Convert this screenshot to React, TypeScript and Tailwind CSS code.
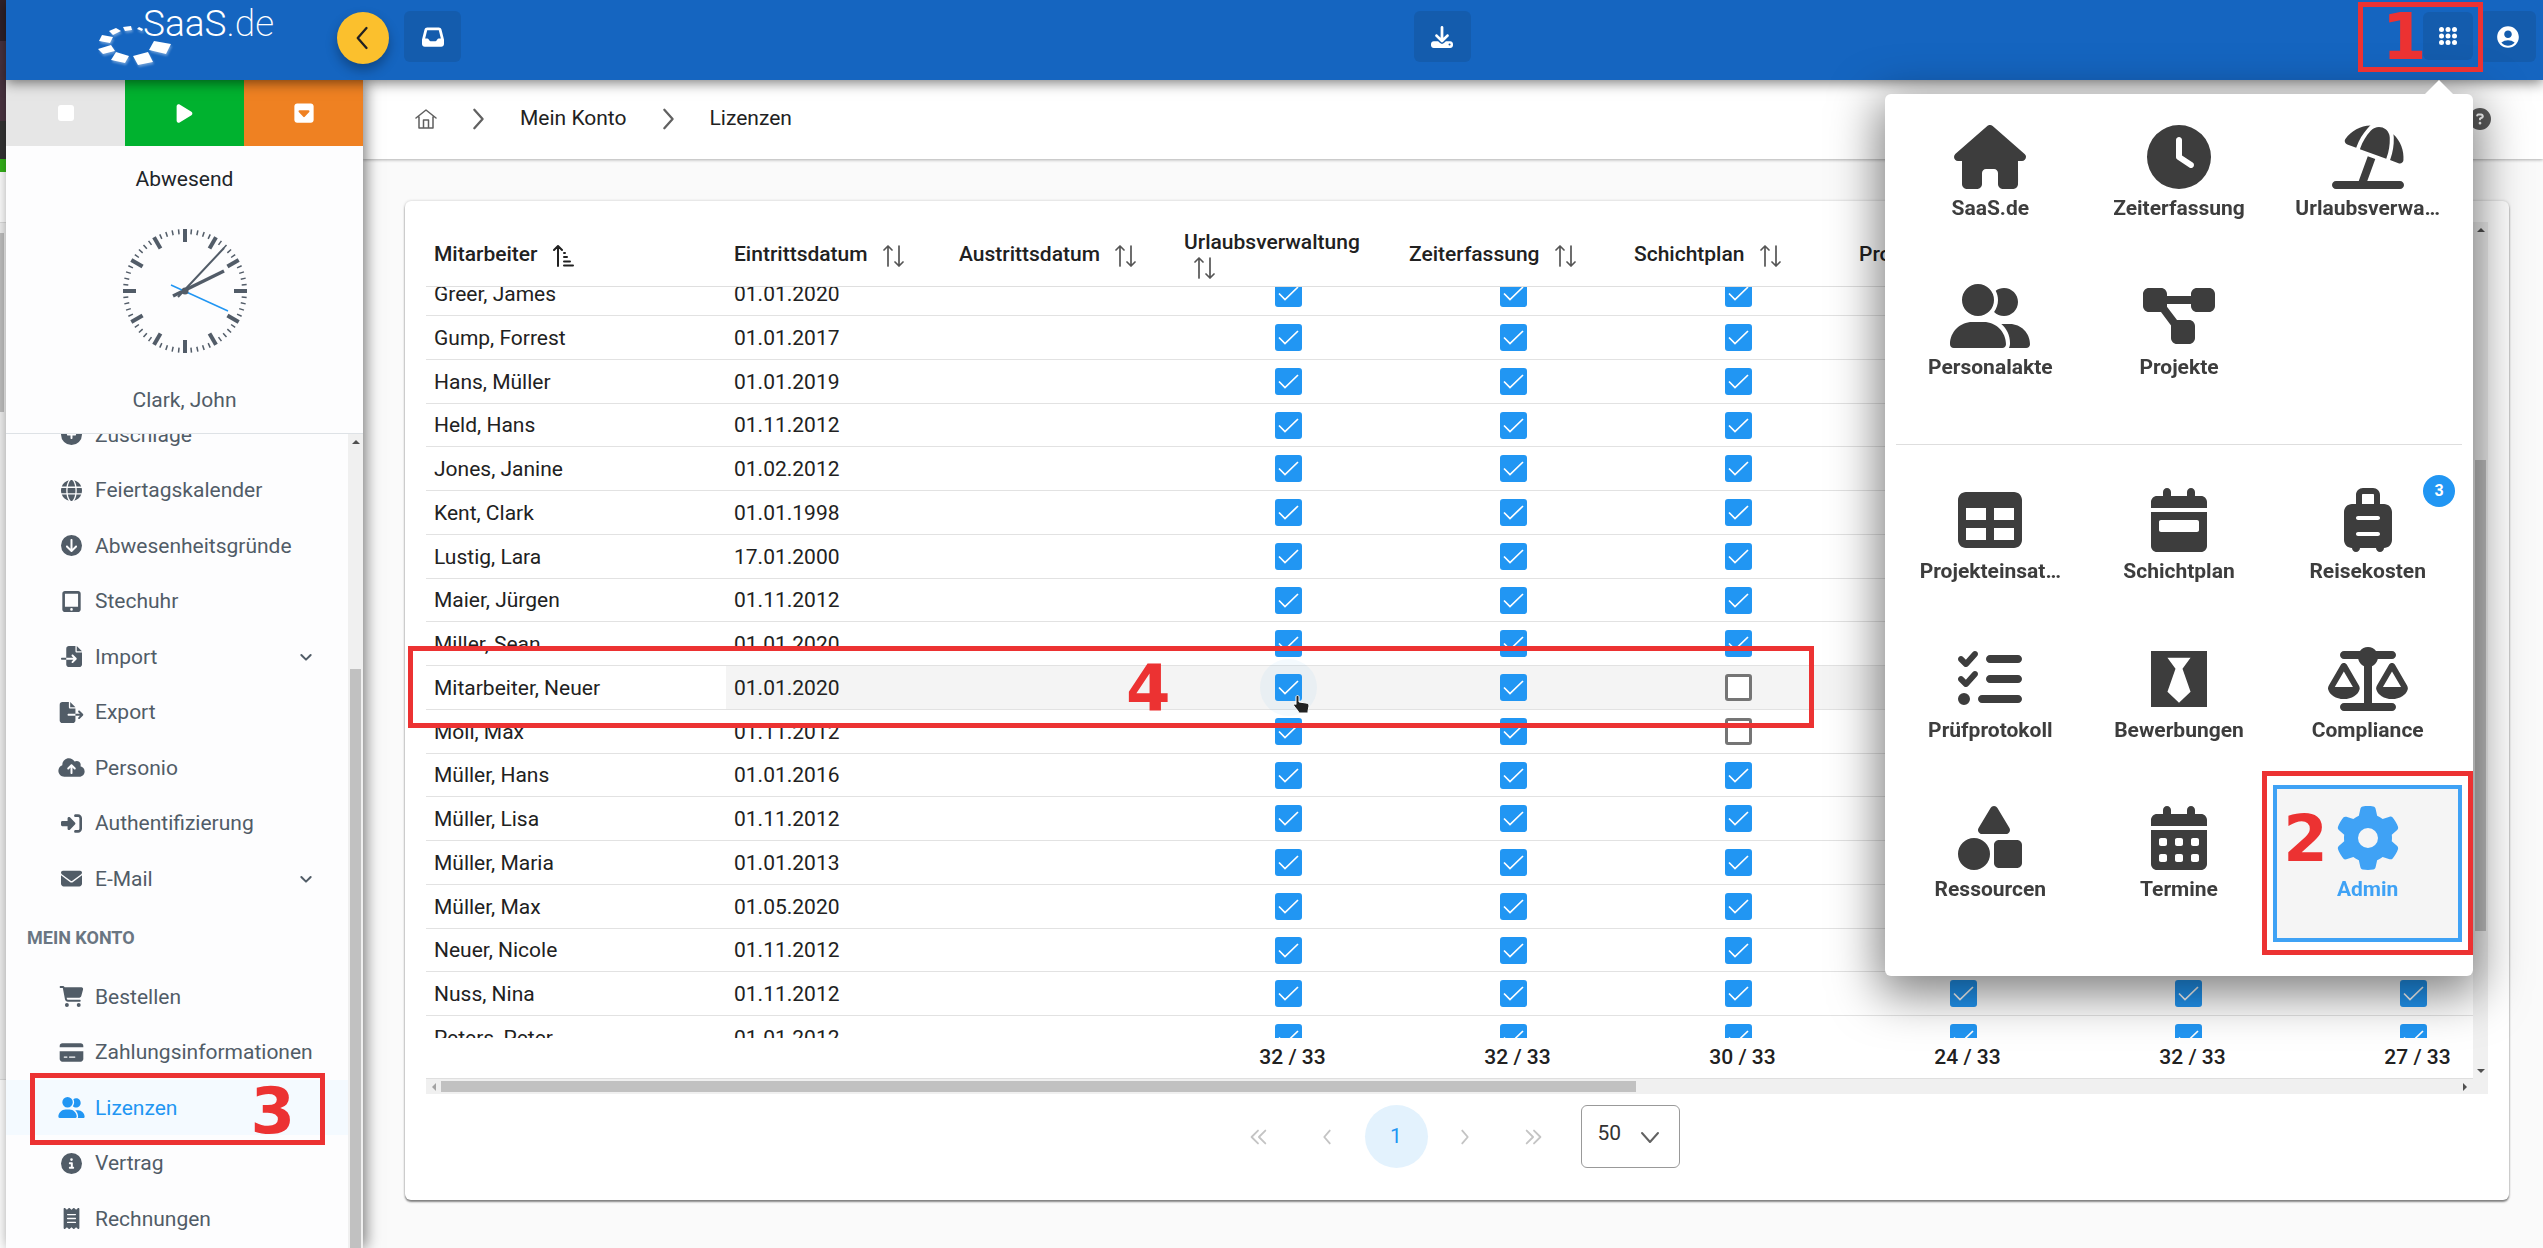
import { useLayoutEffect, useRef, type ComponentType, type ReactNode } from "react";
import {
  FaBlackTie,
  FaCalendarDays,
  FaCalendarWeek,
  FaCartShopping,
  FaCircleArrowDown,
  FaCircleInfo,
  FaCirclePlus,
  FaCircleQuestion,
  FaClock,
  FaCloudArrowUp,
  FaCreditCard,
  FaDiagramProject,
  FaDownload,
  FaEnvelope,
  FaFileExport,
  FaFileImport,
  FaGear,
  FaGlobe,
  FaHouse,
  FaInbox,
  FaListCheck,
  FaPlay,
  FaReceipt,
  FaRightToBracket,
  FaScaleBalanced,
  FaShapes,
  FaSquareCaretDown,
  FaSuitcaseRolling,
  FaTable,
  FaTabletScreenButton,
  FaUmbrellaBeach,
  FaUserGroup,
} from "react-icons/fa6";
import { MdAccountCircle } from "react-icons/md";

type Icon = ComponentType<{ className?: string }>;

function useInitialScroll<T extends HTMLElement>(top: number) {
  const ref = useRef<T>(null);
  useLayoutEffect(() => {
    if (ref.current) ref.current.scrollTop = top;
  }, [top]);
  return ref;
}

/* ---------- small drawings ---------- */

function Chevron({ d, className }: { d: string; className: string }) {
  return (
    <svg viewBox="0 0 24 24" className={className} fill="none" stroke="currentColor" strokeLinecap="round" strokeLinejoin="round" aria-hidden="true">
      <path d={d} />
    </svg>
  );
}

function LogoRing() {
  return (
    <svg viewBox="0 0 76 42" className="h-[42px] w-[76px] drop-shadow-[1px_2px_1px_rgba(255,255,255,0.35)]" fill="#fff" aria-hidden="true">
      <polygon points="56,15 73,18 68,28 51,24" />
      <polygon points="35,30 50,26 55,36 40,39" />
      <polygon points="18,26 31,30 27,37 13,34" />
      <polygon points="0,23 13,19 17,25 5,28" />
      <polygon points="4,9 15,11 12,17 1,15" />
      <polygon points="11,5 18,2 23,5 15,9" />
      <polygon points="25,1 33,0 34,4 27,5" />
      <polygon points="39,3 41,1 45,3 44,5" />
    </svg>
  );
}

function HomeOutline() {
  return (
    <svg viewBox="0 0 22 20" className="h-5 w-[22px]" fill="none" stroke="#5f5f5f" strokeWidth="1.5" strokeLinejoin="round" strokeLinecap="round" aria-hidden="true">
      <path d="M1 9 11 1l10 8M4 7.500V19h14V7.500M8.500 19v-8h5v8" />
    </svg>
  );
}

function SortBoth() {
  return (
    <svg viewBox="0 0 21 22" className="ml-[10px] inline-block h-[22px] w-[21px] align-[-6px]" fill="none" stroke="#555" strokeWidth="1.700" strokeLinecap="round" strokeLinejoin="round" aria-hidden="true">
      <path d="M5 21V1M1 5l4-4 4 4M16 1v20M12 17l4 4 4-4" />
    </svg>
  );
}

function SortAscending() {
  return (
    <svg viewBox="0 0 21 22" className="ml-[10px] inline-block h-[22px] w-[21px] align-[-6px]" fill="none" stroke="#212121" strokeWidth="2" strokeLinecap="round" strokeLinejoin="round" aria-hidden="true">
      <path d="M5 21V1M1 5l4-4 4 4M11 8h1M11 12h3M11 16.500h6M11 20.500h9" />
    </svg>
  );
}

function AppsGrid() {
  return (
    <svg viewBox="0 0 18 18" className="size-[18px]" fill="#fff" aria-hidden="true">
      {[2.5, 9, 15.5].map((y) => [2.5, 9, 15.5].map((x) => <circle key={`${x}-${y}`} cx={x} cy={y} r="2.5" />))}
    </svg>
  );
}

function Clock() {
  const ticks = Array.from({ length: 60 }, (_, i) => i);
  return (
    <svg viewBox="-62 -62 124 124" className="size-[124px]" role="img" aria-label="Uhr">
      {ticks.map((i) => (
        <line
          key={i}
          y1={-62}
          y2={i % 5 === 0 ? -49 : -57}
          stroke="#525c68"
          strokeWidth={i % 5 === 0 ? 4 : 1.5}
          transform={`rotate(${i * 6})`}
        />
      ))}
      <line x1="-7" y1="6" x2="39" y2="-43" stroke="#525c68" strokeWidth="2" />
      <line x1="-12" y1="5" x2="39" y2="-20" stroke="#525c68" strokeWidth="3.500" />
      <line x1="-14" y1="-6" x2="43" y2="20" stroke="#2196f3" strokeWidth="1.500" />
      <circle r="3.500" fill="#525c68" />
    </svg>
  );
}

function HandCursor() {
  return (
    <svg viewBox="0 0 17 19" className="pointer-events-none absolute left-[18px] top-[21px] h-[19px] w-[17px]" fill="#222" stroke="#fff" strokeWidth="1" strokeLinejoin="round" aria-hidden="true">
      <path d="M3 2c0-2 3-2 3 0v5l7 1c2 .4 3 1 3 3l-1 5v2H6l-1-2-4-5c-1-1.500 1-3 2-1.500z" />
    </svg>
  );
}

function Caret({ dir, className }: { dir: "up" | "down" | "left" | "right"; className?: string }) {
  const d = { up: "M0 6 4 2l4 4z", down: "M0 2h8L4 6z", left: "M6 0v8L2 4z", right: "M2 0v8l4-4z" }[dir];
  return (
    <svg viewBox="0 0 8 8" className={`size-2 shrink-0 ${className ?? "text-[#505050]"}`} fill="currentColor" aria-hidden="true">
      <path d={d} />
    </svg>
  );
}

/* ---------- header ---------- */

const apps1: Array<[Icon, string]> = [
  [FaHouse, "SaaS.de"],
  [FaClock, "Zeiterfassung"],
  [FaUmbrellaBeach, "Urlaubsverwa…"],
  [FaUserGroup, "Personalakte"],
  [FaDiagramProject, "Projekte"],
];
const apps2: Array<[Icon, string]> = [
  [FaTable, "Projekteinsat…"],
  [FaCalendarWeek, "Schichtplan"],
  [FaSuitcaseRolling, "Reisekosten"],
  [FaListCheck, "Prüfprotokoll"],
  [FaBlackTie, "Bewerbungen"],
  [FaScaleBalanced, "Compliance"],
  [FaShapes, "Ressourcen"],
  [FaCalendarDays, "Termine"],
  [FaGear, "Admin"],
];

function AppTile({ icon: I, label }: { icon: Icon; label: string }) {
  const active = label === "Admin";
  return (
    <div className="relative">
      <button
        className={
          active
            ? "flex h-[157px] w-full flex-col items-center bg-[#f5f5f5] pt-[21px] text-[#3fa2f5] outline-4 -outline-offset-4 outline-[#3fa2f5]"
            : "flex h-[157px] w-full flex-col items-center pt-[21px] text-[#3d3d3d]"
        }
      >
        <I className="h-16 w-20" />
        <span className="mt-[7px] text-[21px] leading-6 font-bold">{label}</span>
      </button>
      {label === "Reisekosten" && (
        <span className="absolute top-2 right-[7px] flex size-8 items-center justify-center rounded-full bg-[#2196f3] text-base font-bold text-white">3</span>
      )}
      {active && (
        <span className="pointer-events-none absolute -inset-x-[11px] -top-[14px] -bottom-[13px] border-[5px] border-[#ec3232]">
          <span className="absolute top-[39px] left-4 font-['DejaVu_Sans'] text-[64px] leading-12 font-bold text-[#ec3232]">2</span>
        </span>
      )}
    </div>
  );
}

function AppMenu() {
  return (
    <div className="absolute top-[82px] right-0 w-[588px] rounded-md bg-white px-[11px] pt-[10px] pb-[34px] shadow-[0_12px_48px_6px_rgba(0,0,0,0.5)]">
      <span className="absolute -top-[14px] right-[20px] border-x-[14px] border-b-[14px] border-x-transparent border-b-white" />
      <div className="grid grid-cols-3 gap-y-0.5">
        {apps1.map(([icon, label]) => (
          <AppTile key={label} icon={icon} label={label} />
        ))}
      </div>
      <hr className="mt-6 mb-[22px] border-[#dedede]" />
      <div className="grid grid-cols-3 gap-y-0.5">
        {apps2.map(([icon, label]) => (
          <AppTile key={label} icon={icon} label={label} />
        ))}
      </div>
    </div>
  );
}

function HeaderButton({ label, children }: { label: string; children: ReactNode }) {
  return (
    <button aria-label={label} className="mt-[11px] flex h-[51px] w-[57px] items-center justify-center rounded-md bg-[#145cad] text-white">
      {children}
    </button>
  );
}

function Header() {
  return (
    <header className="relative z-30 flex h-20 shrink-0 items-start bg-[#1565c0] pr-[7px] shadow-[0_3px_12px_rgba(0,0,0,0.5)]">
      <a href="#start" className="flex h-full w-[331px] items-start pl-[92px] text-white">
        <span className="mt-[26px] shrink-0">
          <LogoRing />
        </span>
        <span className="-ml-[31px] pt-1 text-[37px] leading-10 font-light">
          SaaS<span className="font-extralight">.de</span>
        </span>
      </a>
      <button aria-label="Menü einklappen" className="mt-3 flex size-[52px] items-center justify-center rounded-full bg-[#fbc02d] text-[#212121] shadow-[0_6px_12px_rgba(0,0,0,0.3)]">
        <Chevron d="M15 3.500 7.500 12l7.500 8.500" className="size-7 stroke-2" />
      </button>
      <div className="ml-[15px]">
        <HeaderButton label="Posteingang">
          <FaInbox className="size-[22px]" />
        </HeaderButton>
      </div>
      <div className="flex flex-1 justify-center">
        <HeaderButton label="Herunterladen">
          <FaDownload className="size-[22px]" />
        </HeaderButton>
      </div>
      <div className="relative mt-3">
        <button aria-label="Apps" className="flex h-12 w-[50px] items-center justify-center rounded-md bg-[#145cad]">
          <AppsGrid />
        </button>
        <AppMenu />
        <span className="pointer-events-none absolute -top-[10px] -right-[10px] z-10 h-[70px] w-[125px] border-[5px] border-[#ec3232]">
          <span className="absolute top-[6px] left-[19px] font-['DejaVu_Sans'] text-[64px] leading-12 font-bold text-[#ec3232]">1</span>
        </span>
      </div>
      <div className="ml-[6px]">
        <HeaderButton label="Benutzerkonto">
          <MdAccountCircle className="size-[26px]" />
        </HeaderButton>
      </div>
    </header>
  );
}

/* ---------- sidebar ---------- */

const nav1: Array<[Icon, string, boolean?]> = [
  [FaCirclePlus, "Zuschläge"],
  [FaGlobe, "Feiertagskalender"],
  [FaCircleArrowDown, "Abwesenheitsgründe"],
  [FaTabletScreenButton, "Stechuhr"],
  [FaFileImport, "Import", true],
  [FaFileExport, "Export"],
  [FaCloudArrowUp, "Personio"],
  [FaRightToBracket, "Authentifizierung"],
  [FaEnvelope, "E-Mail", true],
];
const nav2: Array<[Icon, string, boolean?]> = [
  [FaCartShopping, "Bestellen"],
  [FaCreditCard, "Zahlungsinformationen"],
  [FaUserGroup, "Lizenzen"],
  [FaCircleInfo, "Vertrag"],
  [FaReceipt, "Rechnungen"],
];

function NavList({ items }: { items: Array<[Icon, string, boolean?]> }) {
  return (
    <ul>
      {items.map(([I, label, expandable]) => {
        const active = label === "Lizenzen";
        return (
          <li key={label} className="relative h-[55px] even:h-14">
            <a
              href={`#${label}`}
              className={
                active
                  ? "flex h-full items-center bg-[#f4faff] pr-[34px] pl-[52px] text-[#2196f3]"
                  : "flex h-full items-center pr-[34px] pl-[52px] text-[#515c67]"
              }
            >
              <I className="h-[21px] w-[27px] shrink-0" />
              <span className="ml-[10px] flex-1 text-[21px] leading-6">{label}</span>
              {expandable && <Chevron d="M5 9l7 7 7-7" className="size-4 shrink-0 stroke-3" />}
            </a>
            {active && (
              <span className="pointer-events-none absolute -top-[7px] -bottom-[10px] left-6 z-10 w-[295px] border-[5px] border-[#ec3232]">
                <span className="absolute top-[9px] right-[25px] font-['DejaVu_Sans'] text-[64px] leading-12 font-bold text-[#ec3232]">3</span>
              </span>
            )}
          </li>
        );
      })}
    </ul>
  );
}

function Sidebar() {
  const menu = useInitialScroll<HTMLElement>(27);
  return (
    <aside className="relative z-20 flex w-[357px] shrink-0 flex-col bg-[#fdfdfe] shadow-[3px_0_14px_rgba(0,0,0,0.5)]">
      <div className="grid h-[66px] shrink-0 grid-cols-3 text-white">
        <button aria-label="Stopp" className="flex items-center justify-center bg-[#e6e6e6]">
          <span className="size-4 rounded-[3px] bg-white" />
        </button>
        <button aria-label="Start" className="flex items-center justify-center bg-[#00b22f]">
          <FaPlay className="h-[21px] w-auto" />
        </button>
        <button aria-label="Aktionen" className="flex items-center justify-center bg-[#ef8122]">
          <FaSquareCaretDown className="h-[22px] w-auto" />
        </button>
      </div>
      <div className="flex shrink-0 flex-col items-center border-b border-[#dee2e6] pt-[21px] pb-[21px] text-[21px] leading-6">
        <p className="text-[#212529]">Abwesend</p>
        <div className="mt-[38px] mb-[35px]">
          <Clock />
        </div>
        <p className="text-[#515c67]">Clark, John</p>
      </div>
      <div className="flex min-h-0 flex-1">
        <nav ref={menu} className="flex-1 overflow-hidden pb-4">
          <NavList items={nav1} />
          <h2 className="flex h-[63px] items-center pl-[21px] text-lg font-bold text-[#6a7682]">MEIN KONTO</h2>
          <NavList items={nav2} />
        </nav>
        <div className="flex w-[15px] flex-col items-center bg-[#f0f0f0] pt-1">
          <Caret dir="up" />
          <div className="mt-[223px] w-[11px] flex-1 bg-[#c1c1c1]" />
        </div>
      </div>
    </aside>
  );
}

/* ---------- licence table ---------- */

const modules = ["Urlaubsverwaltung", "Zeiterfassung", "Schichtplan", "Projekte", "Personalakte", "Reisekosten"];
const totals = ["32 / 33", "32 / 33", "30 / 33", "24 / 33", "32 / 33", "27 / 33"];
const employees: Array<[string, string]> = [
  ["Greer, James", "01.01.2020"],
  ["Gump, Forrest", "01.01.2017"],
  ["Hans, Müller", "01.01.2019"],
  ["Held, Hans", "01.11.2012"],
  ["Jones, Janine", "01.02.2012"],
  ["Kent, Clark", "01.01.1998"],
  ["Lustig, Lara", "17.01.2000"],
  ["Maier, Jürgen", "01.11.2012"],
  ["Miller, Sean", "01.01.2020"],
  ["Mitarbeiter, Neuer", "01.01.2020"],
  ["Moll, Max", "01.11.2012"],
  ["Müller, Hans", "01.01.2016"],
  ["Müller, Lisa", "01.11.2012"],
  ["Müller, Maria", "01.01.2013"],
  ["Müller, Max", "01.05.2020"],
  ["Neuer, Nicole", "01.11.2012"],
  ["Nuss, Nina", "01.11.2012"],
  ["Peters, Peter", "01.01.2012"],
];

function LicenceBox({ label, checked, hovered }: { label: string; checked: boolean; hovered: boolean }) {
  return (
    <span className="relative mx-auto flex size-[27px]">
      {hovered && <span className="absolute -inset-[15px] rounded-full bg-[#2196f3]/5" />}
      <input
        type="checkbox"
        aria-label={label}
        defaultChecked={checked}
        className="peer relative size-[27px] appearance-none rounded-[3px] border-[3px] border-[#757575] bg-white checked:border-[#2196f3] checked:bg-[#2196f3]"
      />
      <svg viewBox="0 0 27 27" className="pointer-events-none absolute inset-0 hidden size-[27px] peer-checked:block" fill="none" stroke="#fff" strokeWidth="1.700" aria-hidden="true">
        <path d="M4 13.500l6 6L23 7" />
      </svg>
      {hovered && <HandCursor />}
    </span>
  );
}

function LicenceTable() {
  const scroller = useInitialScroll<HTMLDivElement>(15);
  return (
    <div ref={scroller} className="min-h-0 min-w-0 flex-1 overflow-hidden">
      <table className="w-[2100px] table-fixed border-separate border-spacing-0 text-left text-[21px] leading-6 text-[#212121]">
        <colgroup>
          <col className="w-[300px]" />
          <col span={8} className="w-[225px]" />
        </colgroup>
        <thead className="sticky top-0 z-10 bg-white">
          <tr className="h-[65px]">
            <th className="border-b border-[#dfdfdf] px-2 font-medium">
              Mitarbeiter <SortAscending />
            </th>
            {["Eintrittsdatum", "Austrittsdatum", ...modules].map((name) => (
              <th key={name} className="border-b border-[#dfdfdf] px-2 font-medium">
                {name} <SortBoth />
              </th>
            ))}
          </tr>
        </thead>
        <tbody>
          {employees.map(([name, start], row) => {
            const hovered = name === "Mitarbeiter, Neuer";
            return (
              <tr
                key={name}
                className={
                  hovered
                    ? "h-11 nth-[4n]:h-[43px] [&>td]:border-b [&>td]:border-[#e2e2e2] [&>td+td]:bg-[#f4f4f4]"
                    : "h-11 nth-[4n]:h-[43px] [&>td]:border-b [&>td]:border-[#e2e2e2]"
                }
              >
                <td className="px-2">{name}</td>
                <td className="px-2">{start}</td>
                <td />
                {modules.map((m, col) => (
                  <td key={m}>
                    <LicenceBox label={`${m}: ${name}`} checked={!(col === 2 && (row === 9 || row === 10))} hovered={hovered && col === 0} />
                  </td>
                ))}
              </tr>
            );
          })}
        </tbody>
        <tfoot className="sticky bottom-0 bg-white">
          <tr className="h-[41px]">
            <td colSpan={3} className="border-b border-[#dfdfdf]" />
            {totals.map((t, i) => (
              <td key={i} className="border-b border-[#dfdfdf] pb-0.5 pl-2 text-center font-medium">
                {t}
              </td>
            ))}
          </tr>
        </tfoot>
      </table>
    </div>
  );
}

function Paginator() {
  const item = "flex size-[63px] items-center justify-center rounded-full text-[#c4c4c4]";
  return (
    <div className="mt-[11px] mb-[11px] flex shrink-0 items-center justify-center gap-[6px] pr-2">
      <button aria-label="Erste Seite" className={item}>
        <Chevron d="M12 5l-7 7 7 7M20 5l-7 7 7 7" className="size-[22px] stroke-2" />
      </button>
      <button aria-label="Vorherige Seite" className={item}>
        <Chevron d="M15 5l-6 7 6 7" className="size-[22px] stroke-2" />
      </button>
      <button className="flex size-[63px] items-center justify-center rounded-full bg-[#e3f2fd] text-[21px] text-[#2196f3]">1</button>
      <button aria-label="Nächste Seite" className={item}>
        <Chevron d="M9 5l6 7-6 7" className="size-[22px] stroke-2" />
      </button>
      <button aria-label="Letzte Seite" className={item}>
        <Chevron d="M4 5l7 7-7 7M12 5l7 7-7 7" className="size-[22px] stroke-2" />
      </button>
      <div className="relative ml-[9px]">
        <select aria-label="Einträge pro Seite" defaultValue="50" className="h-[63px] w-[99px] appearance-none rounded-md border border-[#999] bg-white pb-[6px] pl-4 text-[21px] text-[#333]">
          <option>10</option>
          <option>20</option>
          <option>50</option>
        </select>
        <Chevron d="M4 8l8 9 8-9" className="pointer-events-none absolute top-[20px] right-[18px] size-6 stroke-2 text-[#616161]" />
      </div>
    </div>
  );
}

function LicenceCard() {
  return (
    <section className="relative flex min-h-0 flex-1 flex-col rounded-md bg-white p-[21px] shadow-[0_2px_2px_rgba(0,0,0,0.45),0_0_3px_rgba(0,0,0,0.2)]">
      <div className="flex min-h-0 flex-1">
        <LicenceTable />
        <div className="flex w-[15px] shrink-0 flex-col items-center bg-[#f0f0f0] py-1">
          <Caret dir="up" />
          <div className="mt-[226px] h-[471px] w-[11px] bg-[#c1c1c1]" />
          <Caret dir="down" className="mt-auto text-[#505050]" />
        </div>
      </div>
      <div className="flex h-[15px] shrink-0 items-center bg-[#f0f0f0] pr-[19px] pl-1">
        <Caret dir="left" className="text-[#a3a3a3]" />
        <div className="ml-[3px] h-[11px] w-[58.6%] bg-[#c1c1c1]" />
        <Caret dir="right" className="ml-auto text-[#505050]" />
      </div>
      <Paginator />
      <span className="pointer-events-none absolute top-[445px] left-[3px] h-[82px] w-[1406px] border-[5px] border-[#ec3232]">
        <span className="absolute top-[14px] left-[713px] font-['DejaVu_Sans'] text-[64px] leading-12 font-bold text-[#ec3232]">4</span>
      </span>
    </section>
  );
}

function Breadcrumbs() {
  return (
    <nav aria-label="Brotkrumen" className="relative z-10 flex h-[79px] shrink-0 items-center bg-white px-[52px] pb-px text-[21px] text-[#212121] shadow-[0_1px_3px_rgba(0,0,0,0.3)]">
      <a href="#start" aria-label="Start">
        <HomeOutline />
      </a>
      <Chevron d="M8 2l9 10-9 10" className="ml-[30px] size-[22px] stroke-[2.500] text-[#616161]" />
      <a href="#konto" className="ml-[31px]">
        Mein Konto
      </a>
      <Chevron d="M8 2l9 10-9 10" className="ml-[30px] size-[22px] stroke-[2.500] text-[#616161]" />
      <a href="#lizenzen" className="ml-[31px]">
        Lizenzen
      </a>
      <button aria-label="Hilfe" className="ml-auto">
        <FaCircleQuestion className="size-[22px] text-[#5c5c5c]" />
      </button>
    </nav>
  );
}

/* Edge of the window lying behind the page */
function WindowEdge() {
  return (
    <div className="flex w-[6px] shrink-0 flex-col bg-white">
      <div className="h-[41px] bg-[#30222b]" />
      <div className="h-20 bg-[#4a3441]" />
      <div className="h-[38px] bg-[#333]" />
      <div className="h-[13px] bg-[#35b41a]" />
      <div className="h-[50px] bg-white" />
      <div className="h-[858px] border-y border-[#ddd] bg-[#f0f0f0] pt-[10px]">
        <div className="h-[179px] w-1 bg-[#bfbfbf]" />
      </div>
    </div>
  );
}

export default function App() {
  return (
    <div className="flex h-screen overflow-hidden bg-[#fafafa] font-['Roboto',sans-serif]">
      <WindowEdge />
      <div className="flex min-w-0 flex-1 flex-col">
        <Header />
        <div className="flex min-h-0 flex-1">
          <Sidebar />
          <div className="flex min-w-0 flex-1 flex-col">
            <Breadcrumbs />
            <main className="flex min-h-0 flex-1 flex-col pt-[42px] pr-[34px] pb-12 pl-[42px]">
              <LicenceCard />
            </main>
          </div>
        </div>
      </div>
    </div>
  );
}
